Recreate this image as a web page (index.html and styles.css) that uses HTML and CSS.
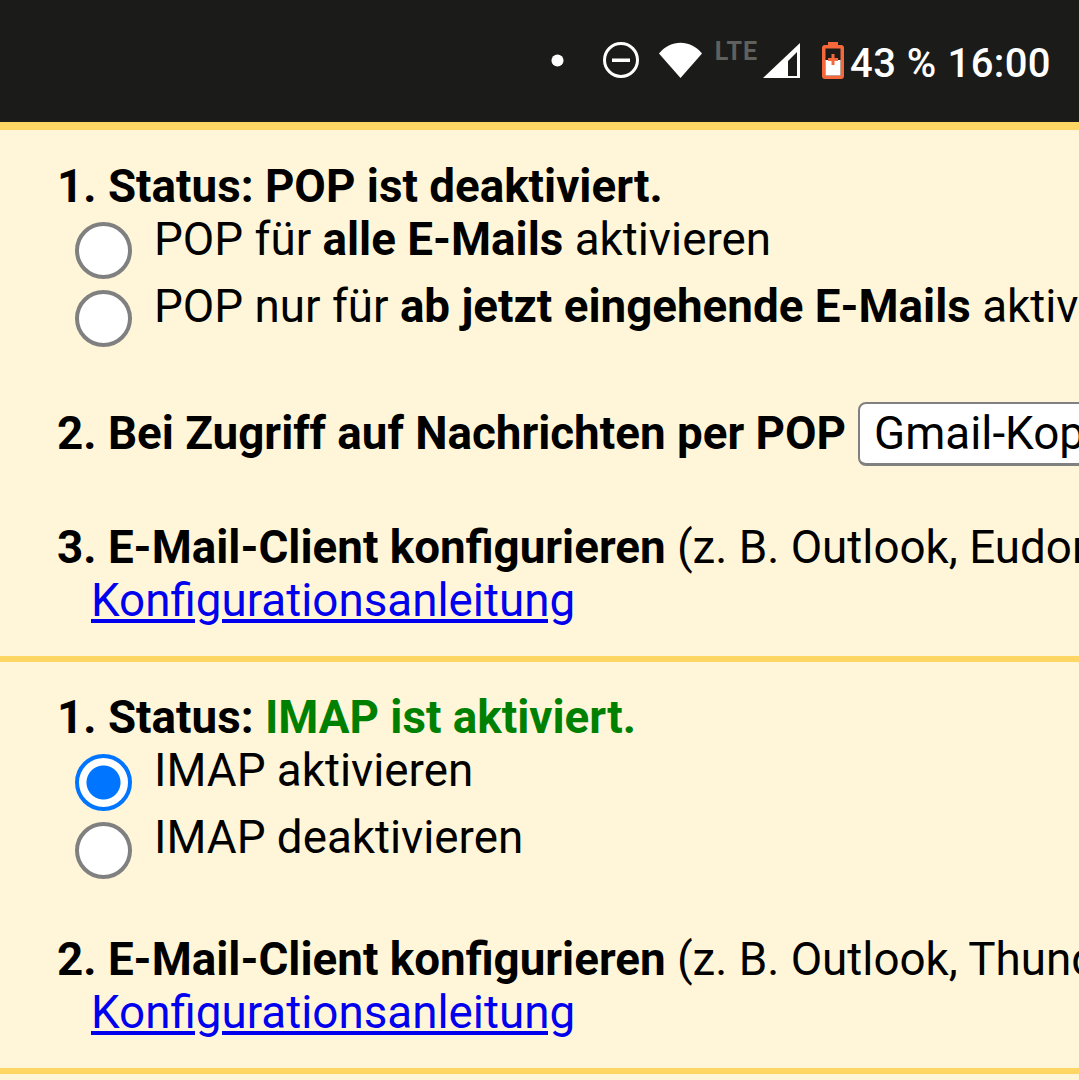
FILE: index.html
```html
<!DOCTYPE html>
<html lang="de">
<head>
    <meta charset="UTF-8">
    <title>Gmail POP und IMAP</title>
    <link rel="stylesheet" href="styles.css">
</head>
<body>

    <!-- Android status bar -->
    <div class="status-bar">
        <svg class="ico ico-dot" width="13" height="13" viewBox="0 0 14 14"><circle cx="7" cy="7" r="6.500" fill="#fff"/></svg>
        <svg class="ico ico-dnd" width="36" height="36" viewBox="0 0 36 36"><circle cx="18" cy="18" r="16.500" fill="none" stroke="#fff" stroke-width="3"/><rect x="9" y="16.500" width="18" height="3.500" fill="#fff"/></svg>
        <svg class="ico ico-wifi" width="43" height="36" viewBox="0 0 43 36"><path d="M0 11.500 C11.500 -3 31.500 -3 43 11.500 L21.500 36 Z" fill="#fff"/></svg>
        <span class="lte">LTE</span>
        <svg class="ico ico-signal" width="37" height="35" viewBox="0 0 37 35"><path d="M0 35 L37 0 V35 Z M25 33 H34 V9 L25 18 Z" fill="#fff" fill-rule="evenodd"/></svg>
        <svg class="ico ico-batt" width="22" height="37" viewBox="0 0 22 37"><path d="M6 0 H16 V3 H19 Q22 3 22 6 V34 Q22 37 19 37 H3 Q0 37 0 34 V6 Q0 3 3 3 H6 Z" fill="#f4683c"/><rect x="3.500" y="6.500" width="15" height="27" fill="#1b1c1a"/><rect x="3.500" y="18" width="15" height="15.500" fill="#fff"/><path d="M9.500 12 H12.500 V16 H16 V19 H12.500 V23 H9.500 V19 H6 V16 H9.500 Z" fill="#f4683c"/></svg>
        <span class="status-text">43 %</span>
        <span class="status-text status-time">16:00</span>
    </div>

    <!-- POP -->
    <div class="section">
        <div class="line"><b>1. Status: POP ist deaktiviert.</b></div>
        <div class="option"><span class="radio"></span><span>POP für <b>alle E-Mails</b> aktivieren</span></div>
        <div class="option"><span class="radio"></span><span>POP nur für <b>ab jetzt eingehende E-Mails</b> aktivieren</span></div>
        <div class="line line-select"><b>2. Bei Zugriff auf Nachrichten per POP</b> <span class="select">Gmail-Kopie im Posteingang behalten</span></div>
        <div class="line line-gap"><b>3. E-Mail-Client konfigurieren</b> (z. B. Outlook, Eudora, Netscape Mail)</div>
        <div class="line indent"><a href="#">Konfigurationsanleitung</a></div>
    </div>

    <!-- IMAP -->
    <div class="section">
        <div class="line"><b>1. Status: <span class="green">IMAP ist aktiviert.</span></b></div>
        <div class="option"><span class="radio radio-on"></span><span>IMAP aktivieren</span></div>
        <div class="option"><span class="radio"></span><span>IMAP deaktivieren</span></div>
        <div class="line line-gap2"><b>2. E-Mail-Client konfigurieren</b> (z. B. Outlook, Thunderbird, iPhone)</div>
        <div class="line indent"><a href="#">Konfigurationsanleitung</a></div>
    </div>

    <div class="section section-end"></div>

</body>
</html>
```
FILE: styles.css
```css
html, body {
    height: 1080px;
    overflow: hidden;
}

body {
    margin: 0;
    padding: 0;
    font-family: Roboto, "Liberation Sans", sans-serif;
    font-size: 45.75px;
    color: #000;
    background-color: #fff6d9;
    white-space: nowrap;
}

/* Status bar */
.status-bar {
    display: flex;
    align-items: center;
    justify-content: flex-end;
    height: 122px;
    padding-right: 28px;
    background-color: #1b1c1a;
    color: #fff;
    box-sizing: border-box;
}

.ico {
    display: block;
    flex: none;
    margin-bottom: 2px;
}

.ico-dot { margin-right: 39px; }
.ico-dnd { margin-right: 20px; }
.ico-wifi { margin-right: 13px; }
.ico-signal { margin-left: 5px; margin-right: 22px; }
.ico-batt { margin-right: 6px; }

.lte {
    align-self: flex-start;
    margin-top: 39px;
    font-size: 25px;
    font-weight: 700;
    line-height: 26px;
    letter-spacing: 1px;
    color: #5f615e;
}

.status-text {
    margin-top: 4px;
    font-size: 40px;
    font-weight: 500;
    letter-spacing: 0.4px;
}

.status-time {
    margin-left: 11px;
}

/* Settings blocks */
.section {
    border-top: 8px solid #fdd663;
    padding: 30px 0 29px 57px;
}

.section + .section {
    border-top-width: 6px;
    padding-top: 29px;
}

.section-end {
    padding: 0;
}

.line {
    height: 53px;
    line-height: 53px;
}

.line-select {
    display: flex;
    align-items: center;
    gap: 12px;
    margin-top: 60px;
}

.line-gap {
    margin-top: 61px;
}

.line-gap2 {
    margin-top: 55px;
}

.indent {
    padding-left: 34px;
}

a {
    color: #0000ee;
}

.green {
    color: #008000;
}

.option {
    display: flex;
    height: 67px;
    line-height: 53px;
    padding-left: 18px;
}

.radio {
    flex: none;
    width: 57px;
    height: 57px;
    margin: 9px 22px 0 0;
    box-sizing: border-box;
    border: 4px solid #808080;
    border-radius: 50%;
    background-color: #fff;
}

.option + .option .radio {
    margin-top: 10px;
}

.section + .section .radio {
    margin-top: 10px;
}

.section + .section .option + .option .radio {
    margin-top: 11px;
}

.radio-on {
    border-color: #0075ff;
    background: radial-gradient(circle, #0075ff 0, #0075ff 16.500px, #fff 17.500px);
}

.select {
    display: block;
    height: 64px;
    line-height: 60px;
    padding-left: 14px;
    box-sizing: border-box;
    border: 2px solid #808080;
    border-bottom-width: 3px;
    border-radius: 8px;
    background-color: #fff;
}
```
